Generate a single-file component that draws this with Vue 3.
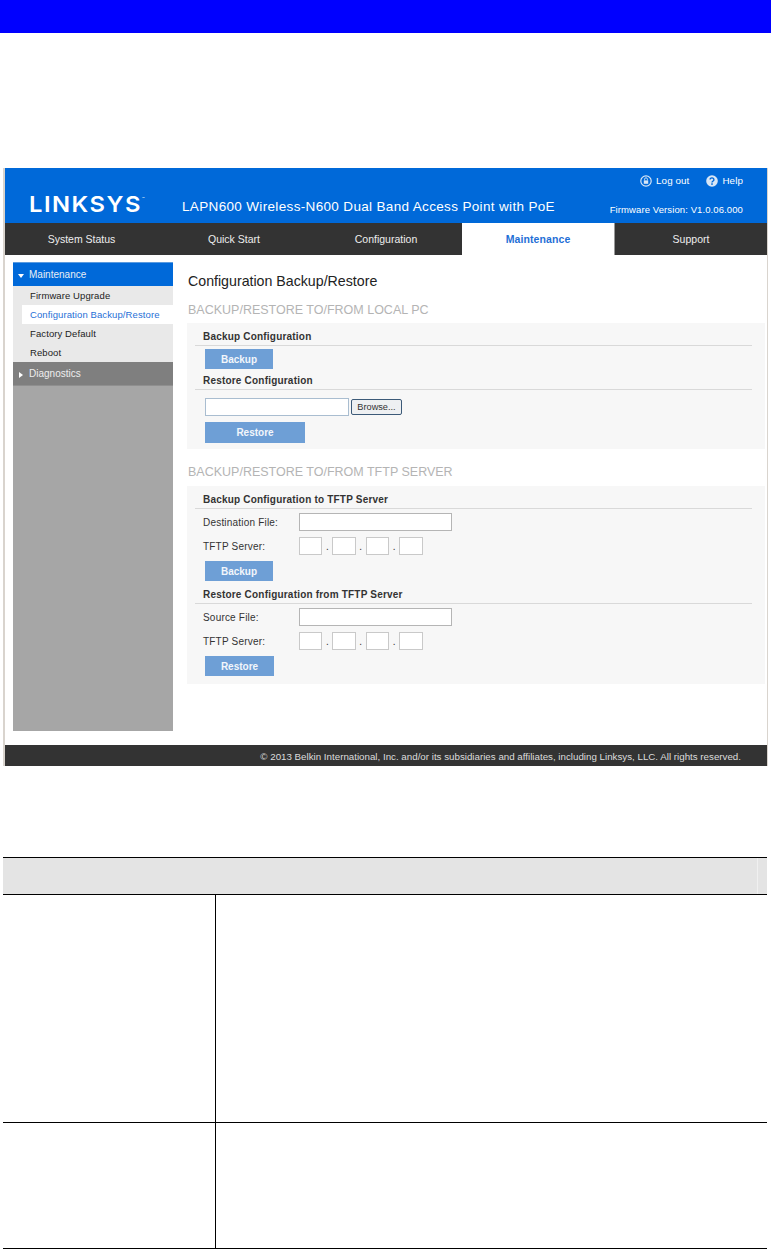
<script setup>
const tabs = [
  { label: 'System Status', width: 153 },
  { label: 'Quick Start', width: 152 },
  { label: 'Configuration', width: 152 },
  { label: 'Maintenance', width: 153, active: true },
  { label: 'Support', width: 152 },
]
const subItems = [
  { label: 'Firmware Upgrade' },
  { label: 'Configuration Backup/Restore', active: true },
  { label: 'Factory Default' },
  { label: 'Reboot' },
]
const octets = [1, 2, 3, 4]
</script>

<template>
  <div class="page">
    <div class="topbar"></div>

    <div class="shot">
      <header class="head">
        <div class="logo">LINKSYS<sup class="tm">™</sup></div>
        <div class="product">LAPN600 Wireless-N600 Dual Band Access Point with PoE</div>
        <div class="head-right">
          <div class="links">
            <span class="link">
              <svg class="ico" viewBox="0 0 12 12"><circle cx="6" cy="6" r="5.2" fill="#0069d9" stroke="#d8e6f6" stroke-width="1.2" /><path d="M3.8 5.4h4.4v3.4H3.8z" fill="#d8e6f6" /><path d="M4.6 5.4V4.2a1.4 1.4 0 0 1 2.8 0v1.2" fill="none" stroke="#d8e6f6" stroke-width="0.9" /></svg>
              Log out
            </span>
            <span class="link">
              <svg class="ico" viewBox="0 0 12 12"><circle cx="6" cy="6" r="5.8" fill="#d8e6f6" /><path d="M4.1 4.6a1.9 1.7 0 1 1 3 1.4c-.7.5-1.1.8-1.1 1.5" fill="none" stroke="#0069d9" stroke-width="1.4" /><rect x="5.2" y="8.3" width="1.6" height="1.5" fill="#0069d9" /></svg>
              Help
            </span>
          </div>
          <div class="firmware">Firmware Version: V1.0.06.000</div>
        </div>
      </header>

      <nav class="nav">
        <div
          v-for="t in tabs"
          :key="t.label"
          class="tab"
          :class="{ active: t.active }"
          :style="{ width: t.width + 'px' }"
        >{{ t.label }}</div>
      </nav>

      <div class="body">
        <aside class="side">
          <div class="side-head open"><span class="tri-down"></span>Maintenance</div>
          <ul class="subs">
            <li v-for="s in subItems" :key="s.label" :class="{ active: s.active }">{{ s.label }}</li>
          </ul>
          <div class="side-head closed"><span class="tri-right"></span>Diagnostics</div>
        </aside>

        <main class="main">
          <h1 class="title">Configuration Backup/Restore</h1>
          <h2 class="section">BACKUP/RESTORE TO/FROM LOCAL PC</h2>
          <section class="panel p1">
            <h3 class="sub">Backup Configuration</h3>
            <button class="btn b-short">Backup</button>
            <h3 class="sub">Restore Configuration</h3>
            <div class="file-row">
              <input class="file" type="text" />
              <span class="browse">Browse...</span>
            </div>
            <button class="btn b-long">Restore</button>
          </section>

          <h2 class="section second">BACKUP/RESTORE TO/FROM TFTP SERVER</h2>
          <section class="panel p2">
            <h3 class="sub">Backup Configuration to TFTP Server</h3>
            <div class="field"><label>Destination File:</label><input class="txt" type="text" /></div>
            <div class="field ip">
              <label>TFTP Server:</label>
              <template v-for="o in octets" :key="o">
                <input class="oct" type="text" /><span v-if="o < 4" class="dot">.</span>
              </template>
            </div>
            <button class="btn b-short tight">Backup</button>
            <h3 class="sub">Restore Configuration from TFTP Server</h3>
            <div class="field"><label>Source File:</label><input class="txt" type="text" /></div>
            <div class="field ip">
              <label>TFTP Server:</label>
              <template v-for="o in octets" :key="o">
                <input class="oct" type="text" /><span v-if="o < 4" class="dot">.</span>
              </template>
            </div>
            <button class="btn b-wide tight">Restore</button>
          </section>
        </main>
      </div>

      <footer class="foot">© 2013 Belkin International, Inc. and/or its subsidiaries and affiliates, including Linksys, LLC. All rights reserved.</footer>
    </div>

    <div class="table">
      <div class="t-head"><span class="t-edge"></span></div>
      <div class="t-row r1"><div class="c1"></div><div class="c2"></div></div>
      <div class="t-row r2"><div class="c1"></div><div class="c2"></div></div>
    </div>
  </div>
</template>

<style>
html, body { background: #fff; }
</style>

<style scoped>
.page {
  width: 771px;
  height: 1249px;
  overflow: hidden;
  background: #fff;
  font-family: "Liberation Sans", Arial, sans-serif;
  color: #222;
}
.topbar { height: 33px; background: #0000ff; }

.shot {
  width: 762px;
  margin: 135px 0 0 3px;
  border-left: 2px solid #d9d4ce;
  border-right: 1px solid #d9d4ce;
  box-sizing: content-box;
  height: 598px;
  display: flex;
  flex-direction: column;
}

.head {
  height: 55px;
  background: #0069d9;
  color: #fff;
  display: flex;
  align-items: flex-start;
}
.logo {
  width: 153px;
  margin: 24px 0 0 24px;
  font-family: Inter, "Liberation Sans", sans-serif;
  font-size: 22px;
  font-weight: 600;
  line-height: 24px;
  letter-spacing: 1.4px;
  white-space: nowrap;
  transform: scaleX(1.08);
  transform-origin: left center;
}
.tm { font-size: 4px; vertical-align: 12px; font-weight: 400; line-height: 0; letter-spacing: 0; }
.product {
  margin: 31px 0 0 -24px;
  padding-left: 24px;
  font-size: 13.5px;
  line-height: 16px;
  letter-spacing: 0.34px;
  white-space: nowrap;
}
.head-right {
  margin-left: auto;
  padding: 6px 24px 0 0;
  text-align: right;
  white-space: nowrap;
}
.links {
  display: flex;
  justify-content: flex-end;
  gap: 17px;
  font-size: 9.8px;
  line-height: 13px;
}
.link { display: inline-flex; align-items: center; gap: 4px; letter-spacing: 0.1px; }
.ico { width: 12px; height: 12px; }
.firmware { margin-top: 16px; font-size: 9.5px; line-height: 13px; letter-spacing: 0.1px; }

.nav {
  display: flex;
  height: 32px;
  background: #333;
}
.tab {
  color: #eee;
  font-size: 10.5px;
  line-height: 33px;
  text-align: center;
}
.tab.active {
  background: #fff;
  color: #1f6fd6;
  font-weight: 700;
  letter-spacing: 0.1px;
  border-right: 1px solid #999;
  box-sizing: border-box;
}

.body {
  flex: 1;
  display: flex;
  min-height: 0;
}
.side {
  width: 160px;
  margin: 7px 0 14px 8px;
  background: #a6a6a6;
  flex: none;
  font-size: 10px;
}
.side-head {
  display: flex;
  align-items: center;
  color: #e8eef5;
}
.side-head.open {
  height: 24px;
  background: #0069d9;
  border-top: 1px solid #5a9be0;
  box-sizing: border-box;
}
.side-head.closed {
  height: 24px;
  background: #7f7f7f;
  border-bottom: 1px solid #8f8f8f;
  box-sizing: border-box;
  color: #eee;
}
.tri-down {
  width: 0; height: 0;
  margin: 2px 5px 0 5px;
  border-left: 3px solid transparent;
  border-right: 3px solid transparent;
  border-top: 4px solid #fff;
}
.tri-right {
  width: 0; height: 0;
  margin: 2px 6px 0 6px;
  border-top: 3px solid transparent;
  border-bottom: 3px solid transparent;
  border-left: 4px solid #fff;
}
.subs {
  list-style: none;
  margin: 0;
  padding: 0;
  background: #e9e9e9;
}
.subs li {
  height: 19px;
  line-height: 19px;
  padding-left: 17px;
  color: #222;
  font-size: 9.5px;
  letter-spacing: 0.1px;
}
.subs li.active {
  background: #fff;
  color: #1f6fd6;
  margin-left: 9px;
  padding-left: 8px;
}

.main {
  flex: 1;
  padding: 17px 0 0 14px;
  min-width: 0;
}
.title {
  margin: 0 0 0 1px;
  font-size: 14.2px;
  font-weight: 400;
  line-height: 18px;
  color: #222;
}
.section {
  margin: 12px 0 0 1px;
  font-size: 12.5px;
  line-height: 16px;
  font-weight: 400;
  color: #b4b4b4;
  white-space: nowrap;
}
.section.second { margin-top: 15px; }
.panel {
  background: #f7f7f7;
  width: 578px;
  box-sizing: border-box;
  padding: 7px 13px 0 8px;
}
.p1 { height: 126px; margin-top: 5px; }
.p2 { height: 198px; margin-top: 6px; }
.sub {
  margin: 0;
  padding: 0 0 2px 8px;
  font-size: 10px;
  font-weight: 700;
  line-height: 13px;
  letter-spacing: 0.2px;
  color: #333;
  border-bottom: 1px solid #d9d9d9;
}
.btn {
  display: block;
  margin: 3px 0 0 10px;
  padding: 2px 0 0;
  box-sizing: border-box;
  border: 0;
  height: 20px;
  background: #6e9fd6;
  color: #f2f6fb;
  font: 700 10px/18px "Liberation Sans", Arial, sans-serif;
  text-align: center;
}
.b-short { width: 68px; }
.b-wide { width: 69px; }
.b-long { width: 100px; height: 21px; margin-top: 6px; padding-top: 1px; }
.btn.tight { margin-top: 6px; }
.btn + .sub { margin-top: 5px; }
.p2 .btn + .sub { margin-top: 7px; }
.file-row {
  display: flex;
  align-items: center;
  gap: 2px;
  margin: 8px 0 0 10px;
}
.file {
  width: 144px;
  height: 18px;
  padding: 0;
  box-sizing: border-box;
  background: #fff;
  border: 1px solid #a9bdd0;
}
.browse {
  display: block;
  width: 51px;
  height: 16px;
  box-sizing: border-box;
  border: 1px solid #3c5a78;
  border-radius: 2px;
  background: #eef0f2;
  text-align: center;
  font-size: 9.2px;
  line-height: 14px;
  color: #333;
}
.field {
  display: flex;
  align-items: center;
  height: 18px;
  margin: 4px 0 0 8px;
  font-size: 10px;
  letter-spacing: 0.2px;
  color: #333;
}
.field.ip { margin-top: 6px; }
.field label { width: 96px; flex: none; }
.txt {
  width: 153px;
  height: 18px;
  padding: 0;
  box-sizing: border-box;
  background: #fff;
  border: 1px solid #b5b5b5;
}
.oct {
  width: 23.4px;
  height: 18px;
  padding: 0;
  box-sizing: border-box;
  background: #fff;
  border: 1px solid #c9c9c9;
}
.dot { width: 10px; text-align: center; font-size: 10px; }

.foot {
  height: 21px;
  background: #333;
  color: #ddd;
  font-size: 9.75px;
  line-height: 24px;
  overflow: hidden;
  text-align: right;
  padding-right: 26px;
  white-space: nowrap;
}

.table {
  margin: 91px 0 0 3px;
  width: 764px;
}
.t-head {
  height: 36px;
  background: #e4e4e4;
  border-top: 1px solid #000;
  border-bottom: 1px solid #000;
  display: flex;
  justify-content: flex-end;
}
.t-edge { width: 9px; border-left: 1px solid #f0f0f0; }
.t-row { display: flex; border-bottom: 1px solid #000; }
.r1 { height: 227px; }
.r2 { height: 125px; }
.c1 { width: 212px; border-right: 1px solid #000; }
.c2 { flex: 1; }
</style>
